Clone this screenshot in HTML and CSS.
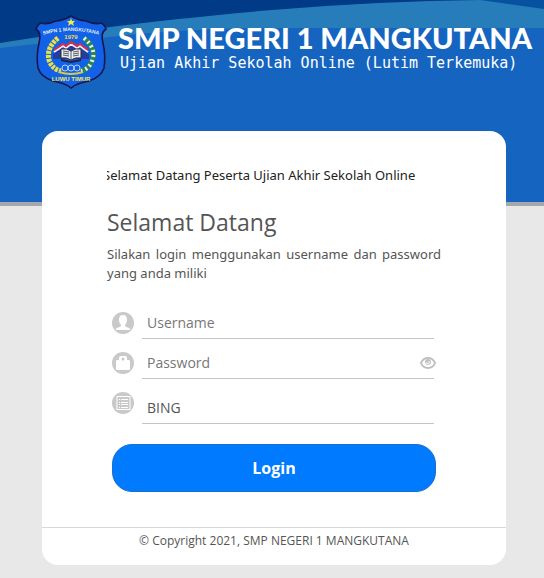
FILE: index.html
```html
<!DOCTYPE html>
<html lang="id">
<head>
  <meta charset="UTF-8">
  <title>SMP NEGERI 1 MANGKUTANA</title>
  <meta name="viewport" content="width=device-width, initial-scale=1.0">
  <link rel="stylesheet" href="styles.css">
</head>
<body>
  <header class="header">
    <svg class="header-bg" viewBox="0 0 544 50" preserveAspectRatio="none" aria-hidden="true">
      <path fill="#277cba" d="M0 0H544V28H250Q170 30 110 37Q50 42 0 48Z"/>
      <path fill="#013a86" d="M0 0H480Q380 1 272 10Q180 18 110 27Q50 35 0 43Z"/>
      <path fill="#0752a0" d="M480 0H544V9Z"/>
    </svg>
    <div class="brand">
      <svg class="logo" viewBox="0 0 72 74" role="img" aria-label="Logo SMPN 1 Mangkutana">
        <path fill="#1262e9" stroke="#1b164b" stroke-width="1.6" d="M36 1Q30 5 21 6Q12 10 6 8Q3 9 1 14Q7 18 4 28Q1 42 3 53Q6 62 18 66Q30 68 36 73Q42 68 54 66Q66 62 69 53Q71 42 68 28Q65 18 71 14Q69 9 66 8Q60 10 51 6Q42 5 36 1Z"/>
        <path fill="#f5ed49" d="M36 3L37 6H40L38 8L39 11L36 9L33 11L34 8L32 6H35Z"/>
        <path id="top-arc" fill="none" d="M4 21Q36 11 68 21"/>
        <text class="logo-name"><textPath href="#top-arc" startOffset="50%">SMPN 1 MANGKUTANA</textPath></text>
        <text class="logo-year" x="36" y="24">1979</text>
        <path fill="none" stroke="#e9e044" stroke-width="5" stroke-dasharray="3 1" d="M23 23Q11 33 14 45Q17 54 26 56"/>
        <path fill="none" stroke="#2b8555" stroke-width="5" d="M49 23Q62 34 57 46Q54 54 46 56"/>
        <path fill="none" stroke="#e5f1e1" stroke-width="4" stroke-dasharray="2 3" d="M49 23Q62 34 57 46Q54 54 46 56"/>
        <path fill="#233d99" d="M18 39L35 28L54 39V44H18Z"/>
        <path fill="none" stroke="#f1eafa" stroke-width="2" d="M19 37L28 31L31 33L36 29L42 33L45 31L53 37"/>
        <path fill="none" stroke="#d92e40" stroke-width="2" d="M19 35L28 29L31 31L36 27L42 31L45 29L53 35"/>
        <path fill="#eeeef0" stroke="#29283c" d="M26 34Q32 33 36 36Q40 33 46 34V43Q40 42 36 45Q32 42 26 43Z"/>
        <path stroke="#55586b" d="M28 36l6 1M28 38l6 1M28 40l6 1M38 37l6 -1M38 39l6 -1M38 41l6 -1M36 36v9"/>
        <path fill="#222238" d="M26 44L36 46L46 44V46L36 48L26 46Z"/>
        <g fill="none" stroke="#b8d0ee">
          <circle cx="30" cy="53" r="3"/><circle cx="36" cy="53" r="3"/><circle cx="42" cy="53" r="3"/>
        </g>
        <path fill="none" stroke="#d4c94d" stroke-width="2" d="M24 57Q36 61 48 57"/>
        <text class="logo-place" x="36" y="66">LUWU TIMUR</text>
      </svg>
      <div>
        <h1 class="brand-title">SMP NEGERI 1 MANGKUTANA</h1>
        <p class="brand-subtitle">Ujian Akhir Sekolah Online (Lutim Terkemuka)</p>
      </div>
    </div>
  </header>

  <main class="card">
    <div class="card-body">
      <div class="ticker">Selamat Datang Peserta Ujian Akhir Sekolah Online</div>
      <h2 class="welcome">Selamat Datang</h2>
      <p class="intro">Silakan login menggunakan username dan password yang anda miliki</p>

      <form class="login-form">
        <div class="field">
          <label for="username" aria-label="Username">
            <svg class="icon" viewBox="0 0 22 22" aria-hidden="true">
              <circle cx="11" cy="11" r="11" fill="#c9c9c9"/>
              <path fill="#fff" d="M11 3C8 3 7 5 7 8Q7 11 9 13V14Q8 15 5 16Q3 17 4 18H18Q19 17 17 16Q14 15 13 14V13Q15 11 15 8C15 5 14 3 11 3Z"/>
            </svg>
          </label>
          <input class="control" id="username" type="text" placeholder="Username">
        </div>
        <div class="field">
          <label for="password" aria-label="Password">
            <svg class="icon" viewBox="0 0 22 22" aria-hidden="true">
              <circle cx="11" cy="11" r="11" fill="#c9c9c9"/>
              <path fill="#fff" d="M7 8V6Q7 4 9 4H13Q15 4 15 6V8H17Q18 8 18 10V17Q18 18 17 18H5Q4 18 4 17V10Q4 8 5 8Z"/>
              <circle cx="11" cy="7" r="1.500" fill="#c9c9c9"/>
            </svg>
          </label>
          <input class="control" id="password" type="password" placeholder="Password">
          <button class="reveal" type="button" aria-label="Tampilkan password">
            <svg viewBox="0 0 16 12" aria-hidden="true">
              <path fill="#fff" stroke="#c0c0c0" stroke-width="2" d="M1 6Q3 1 8 1Q13 1 15 6Q13 11 8 11Q3 11 1 6Z"/>
              <circle cx="8" cy="5" r="3" fill="#c0c0c0"/>
              <path fill="none" stroke="#fff" d="M6 5Q6 7 8 7Q10 7 9 4"/>
            </svg>
          </button>
        </div>
        <div class="field">
          <label for="subject" aria-label="Mata pelajaran">
            <svg class="icon" viewBox="0 0 22 22" aria-hidden="true">
              <circle cx="11" cy="11" r="11" fill="#c9c9c9"/>
              <rect x="5" y="4.500" width="13" height="13" fill="#c9c9c9" stroke="#fff"/>
              <path stroke="#fff" d="M7 7.500h1M9 7.500h7M7 10.500h1M9 10.500h7M7 12.500h1M9 12.500h7M7 15.500h1M9 15.500h7"/>
            </svg>
          </label>
          <select class="control control-select" id="subject">
            <option>BING</option>
          </select>
        </div>
        <button class="submit" type="submit">Login</button>
      </form>
    </div>
    <footer class="card-footer">© Copyright 2021, SMP NEGERI 1 MANGKUTANA</footer>
  </main>
</body>
</html>
```
FILE: styles.css
```css
* {
  box-sizing: border-box;
}

body {
  margin: 0;
  background: #e8e8e8;
  color: #555;
  font-family: "Open Sans", "Noto Sans", sans-serif;
  font-size: 14px;
}

h1, h2, p {
  margin: 0;
}

/* header */
.header {
  position: relative;
  min-height: 206px;
  background: #1565c0;
  border-bottom: 4px solid #a5a8ab;
}

.header-bg {
  position: absolute;
  top: 0;
  left: 0;
  width: 100%;
  height: 50px;
}

.brand {
  position: relative;
  display: flex;
  align-items: flex-start;
  gap: 11px;
  padding: 14px 0 0 35px;
  color: #fff;
  white-space: nowrap;
}

.logo {
  flex: none;
  width: 72px;
  height: 76px;
}

.logo text {
  font-family: "Liberation Sans", sans-serif;
  font-weight: bold;
  text-anchor: middle;
}

.logo-name {
  font-size: 5px;
  fill: #e5ecf5;
}

.logo-year {
  font-size: 6px;
  fill: #f2dc45;
}

.logo-place {
  font-size: 6px;
  fill: #f5ec4d;
}

.brand-title {
  padding-top: 8px;
  font-family: Lato, sans-serif;
  font-size: 29px;
  font-weight: 900;
  line-height: 32px;
}

.brand-subtitle {
  padding-left: 2px;
  font-family: "DejaVu Sans Mono", monospace;
  font-size: 15px;
  line-height: 18px;
}

/* login card */
.card {
  position: relative;
  margin: -75px 38px 13px 42px;
  background: #fff;
  border-radius: 16px;
}

.card-body {
  padding: 34px 65px 35px;
}

.ticker,
.intro {
  font-family: "Noto Sans", "Open Sans", sans-serif;
  font-size: 13px;
}

.ticker {
  overflow: hidden;
  color: #222;
  line-height: 20px;
  text-indent: -4px;
  white-space: nowrap;
}

.welcome {
  margin-top: 21px;
  font-size: 23px;
  font-weight: 400;
  line-height: 32px;
}

.intro {
  margin-top: 7px;
  line-height: 19px;
  text-align: justify;
}

.login-form {
  padding: 23px 5px 0;
}

.field {
  display: flex;
  position: relative;
  align-items: flex-start;
  gap: 8px;
  padding-right: 2px;
}

.icon {
  display: block;
  width: 22px;
  height: 22px;
  margin-top: 6px;
}

.control {
  flex: 1;
  min-width: 0;
  height: 33px;
  margin-bottom: 7px;
  padding: 0 5px;
  background: transparent;
  border: 0;
  border-bottom: 1px solid #c4c4c4;
  border-radius: 0;
  outline: none;
  color: #555;
  font: inherit;
}

.control::placeholder {
  color: #777;
}

.control-select {
  height: 38px;
  padding-top: 6px;
  appearance: none;
}

.reveal {
  position: absolute;
  top: 11px;
  right: 0;
  width: 16px;
  height: 12px;
  padding: 0;
  background: none;
  border: 0;
  cursor: pointer;
}

.reveal svg {
  display: block;
}

.submit {
  display: block;
  width: 100%;
  height: 48px;
  margin-top: 13px;
  background: #007bff;
  border: 1px solid #1c70cc;
  border-radius: 20px;
  color: #fff;
  font-family: inherit;
  font-size: 16px;
  font-weight: 700;
  cursor: pointer;
}

.card-footer {
  padding: 4px 0 15px;
  border-top: 1px solid #d8d8d8;
  font-size: 12px;
  line-height: 18px;
  text-align: center;
}
```
